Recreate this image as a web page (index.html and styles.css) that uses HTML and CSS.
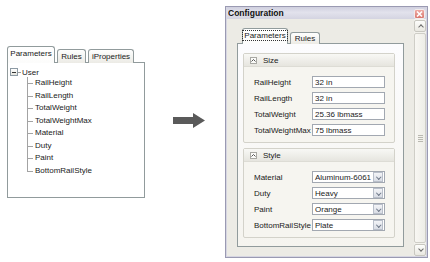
FILE: index.html
```html
<!DOCTYPE html>
<html lang="en">
<head>
    <meta charset="UTF-8">
    <title>Configuration</title>
    <link rel="stylesheet" href="styles.css">
</head>
<body>
    <div class="canvas">
        <div class="params">
            <ul class="tabs">
                <li class="tab active">Parameters</li>
                <li class="tab">Rules</li>
                <li class="tab">iProperties</li>
            </ul>
            <div class="tree">
                <div class="tree-root"><span class="toggle"></span><span class="dash"></span>User</div>
                <ul class="tree-list">
                    <li>RailHeight</li>
                    <li>RailLength</li>
                    <li>TotalWeight</li>
                    <li>TotalWeightMax</li>
                    <li>Material</li>
                    <li>Duty</li>
                    <li>Paint</li>
                    <li>BottomRailStyle</li>
                </ul>
            </div>
        </div>

        <div class="arrow">
            <svg width="32" height="15" viewBox="0 0 32 15"><polygon points="0,4 20,4 20,0 32,7.5 20,15 20,11 0,11" fill="#5a5a5a"/></svg>
        </div>

        <div class="window">
            <div class="titlebar">
                <span class="title">Configuration</span>
                <span class="close">
                    <svg width="9" height="8" viewBox="0 0 9 8"><path d="M2 1.5 L7 6.5 M7 1.5 L2 6.5" stroke="#fff" stroke-width="1.6"/></svg>
                </span>
            </div>
            <div class="client">
                <div class="main">
                    <ul class="tabs small">
                        <li class="tab active"><span class="focus">Parameters</span></li>
                        <li class="tab">Rules</li>
                    </ul>
                    <div class="tab-panel">
                        <div class="group">
                            <div class="group-head">
                                <span class="collapse"><svg width="5" height="5" viewBox="0 0 5 5"><path d="M0.5 3.5 L2.5 1.5 L4.5 3.5" fill="none" stroke="#555" stroke-width="1"/></svg></span>
                                Size
                            </div>
                            <div class="group-body">
                                <div class="field"><span class="label">RailHeight</span><span class="input">32 in</span></div>
                                <div class="field"><span class="label">RailLength</span><span class="input">32 in</span></div>
                                <div class="field"><span class="label">TotalWeight</span><span class="input">25.36 lbmass</span></div>
                                <div class="field"><span class="label">TotalWeightMax</span><span class="input">75 lbmass</span></div>
                            </div>
                        </div>
                        <div class="group">
                            <div class="group-head">
                                <span class="collapse"><svg width="5" height="5" viewBox="0 0 5 5"><path d="M0.5 3.5 L2.5 1.5 L4.5 3.5" fill="none" stroke="#555" stroke-width="1"/></svg></span>
                                Style
                            </div>
                            <div class="group-body">
                                <div class="field"><span class="label">Material</span><span class="input select">Aluminum-6061<span class="drop"></span></span></div>
                                <div class="field"><span class="label">Duty</span><span class="input select">Heavy<span class="drop"></span></span></div>
                                <div class="field"><span class="label">Paint</span><span class="input select">Orange<span class="drop"></span></span></div>
                                <div class="field"><span class="label">BottomRailStyle</span><span class="input select">Plate<span class="drop"></span></span></div>
                            </div>
                        </div>
                    </div>
                </div>
                <div class="scrollbar">
                    <div class="sb-btn up"></div>
                    <div class="sb-thumb"><span class="grip"></span></div>
                    <div class="sb-btn down"></div>
                </div>
            </div>
        </div>
    </div>
</body>
</html>
```

FILE: styles.css
```css
body{
    margin: 0;
    background: #fff;
    font-family: "Liberation Sans", Arial, sans-serif;
    font-size: 8px;
    color: #1a1a1a;
}
ul, li{
    list-style: none;
    padding: 0;
    margin: 0;
}
.canvas{
    display: flex;
    align-items: flex-start;
    width: 430px;
    height: 262px;
    overflow: hidden;
}

/* left: parameter tree */
.params{
    margin: 46px 0 0 7px;
    width: 138px;
}
.tabs{
    display: flex;
    align-items: flex-end;
    gap: 2px;
    height: 17px;
    margin-bottom: -1px;
    position: relative;
    z-index: 1;
}
.tab{
    box-sizing: border-box;
    height: 14px;
    border: 1px solid #919b9c;
    border-bottom: none;
    border-radius: 3px 3px 0 0;
    background: linear-gradient(#fefefe, #ecebe5);
    display: flex;
    align-items: center;
    justify-content: center;
    line-height: 1;
}
.tab.active{
    height: 17px;
    background: linear-gradient(#fff, #fcfcfb);
    padding-bottom: 2px;
}
.params .tab:nth-child(1){ width: 48px; }
.params .tab:nth-child(2){ width: 29px; }
.params .tab:nth-child(3){ width: 46px; }
.tree{
    box-sizing: border-box;
    height: 136px;
    border: 1px solid #919b9c;
    background: #fff;
    padding: 4px 0 0 2px;
}
.tree-root{
    height: 10px;
    display: flex;
    align-items: center;
}
.toggle{
    box-sizing: border-box;
    width: 8px;
    height: 8px;
    border: 1px solid #8d9aa4;
    background: linear-gradient(#fff, #e4e4de);
    display: flex;
    align-items: center;
    justify-content: center;
}
.toggle:after{
    content: "";
    width: 4px;
    height: 1px;
    background: #333;
}
.dash{
    width: 3px;
    height: 1px;
    background: #999;
    margin-right: 1px;
}
.tree-list li{
    position: relative;
    height: 12.5px;
    line-height: 12.5px;
    padding-left: 25px;
}
.tree-list li:before{
    content: "";
    position: absolute;
    left: 17px;
    top: 0;
    bottom: 0;
    border-left: 1px solid #a3a3a3;
}
.tree-list li:last-child:before{
    bottom: 6px;
}
.tree-list li:after{
    content: "";
    position: absolute;
    left: 17px;
    top: 6px;
    width: 6px;
    border-top: 1px solid #a3a3a3;
}

/* arrow */
.arrow{
    margin: 113px 0 0 28px;
    height: 15px;
}
.arrow svg{
    display: block;
}

/* right: configuration window */
.window{
    box-sizing: border-box;
    margin: 6px 0 0 20px;
    width: 203px;
    height: 252px;
    border: 1px solid #9a9ab2;
    background: #d6d6e2;
    padding: 0 1px 1px 1px;
}
.titlebar{
    height: 12px;
    display: flex;
    align-items: center;
    justify-content: space-between;
    background: linear-gradient(#cfcfdf, #e2e2ec 45%, #d4d4e1);
    padding: 0 1px 0 1px;
}
.title{
    font-weight: bold;
    font-size: 8.5px;
    color: #111;
}
.close{
    box-sizing: border-box;
    width: 11px;
    height: 10px;
    margin-top: 2px;
    border: 1px solid #f2ecec;
    border-radius: 2px;
    background: linear-gradient(#efaaa3, #d9786f);
    display: flex;
    align-items: center;
    justify-content: center;
}
.close svg{
    display: block;
}
.client{
    display: flex;
    height: 237px;
    background: #ecebe5;
}
.main{
    flex: 1;
    padding: 9px 10px 0 10px;
}
.tabs.small{
    padding-left: 5px;
    height: 16px;
}
.small .tab:nth-child(1){ width: 46px; height: 16px; }
.small .tab:nth-child(2){ width: 30px; height: 12px; }
.focus{
    outline: 1px dotted #333;
    outline-offset: 0;
    padding: 0 1px;
    line-height: 9px;
}
.tab-panel{
    box-sizing: border-box;
    height: 204px;
    border: 1px solid #919b9c;
    background: linear-gradient(#fcfcfe, #f5f4ef);
    padding: 9px 8px 0 5px;
}
.group{
    border: 1px solid #d3d2ca;
    border-radius: 2px;
    background: #f6f5f0;
    margin-bottom: 5px;
}
.group-head{
    height: 13px;
    display: flex;
    align-items: center;
    padding-left: 6px;
    background: linear-gradient(#f8f8f5, #e6e5df);
    border-bottom: 1px solid #dddcd5;
    box-sizing: border-box;
}
.collapse{
    box-sizing: border-box;
    width: 7px;
    height: 7px;
    border: 1px solid #a9a9a4;
    background: #fbfbf9;
    margin-right: 6px;
    display: flex;
    align-items: center;
    justify-content: center;
}
.collapse svg{
    display: block;
}
.group-body{
    padding: 9px 9px 6px 10px;
    display: flex;
    flex-direction: column;
    gap: 4px;
}
.field{
    display: flex;
    align-items: center;
    height: 12px;
}
.label{
    width: 58px;
    white-space: nowrap;
}
.input{
    box-sizing: border-box;
    width: 73px;
    height: 12px;
    border: 1px solid #a2a8b1;
    background: #fff;
    padding-left: 2px;
    display: flex;
    align-items: center;
    position: relative;
}
.drop{
    position: absolute;
    right: 1px;
    top: 0;
    box-sizing: border-box;
    width: 10px;
    height: 10px;
    border: 1px solid #b9bfca;
    background: linear-gradient(#f3f4f7, #d9dde5);
}
.drop:after{
    content: "";
    position: absolute;
    left: 2.5px;
    top: 1.5px;
    width: 2.5px;
    height: 2.5px;
    border-right: 1px solid #6d7788;
    border-bottom: 1px solid #6d7788;
    transform: rotate(45deg);
}

/* scrollbar */
.scrollbar{
    width: 13px;
    display: flex;
    flex-direction: column;
    background: #f3f2ed;
    padding-top: 1px;
}
.sb-btn{
    box-sizing: border-box;
    height: 12px;
    border: 1px solid #c8c7c0;
    border-radius: 2px;
    background: linear-gradient(#fdfdfb, #e9e8e1);
    position: relative;
}
.sb-btn:after{
    content: "";
    position: absolute;
    left: 3.5px;
    width: 3px;
    height: 3px;
    border-right: 1px solid #6a6a6a;
    border-bottom: 1px solid #6a6a6a;
}
.sb-btn.up:after{
    top: 4px;
    transform: rotate(-135deg);
}
.sb-btn.down:after{
    top: 2px;
    transform: rotate(45deg);
}
.sb-thumb{
    flex: 1;
    box-sizing: border-box;
    margin: 1px 0;
    border: 1px solid #cfcec7;
    border-radius: 2px;
    background: linear-gradient(90deg, #f8f7f3, #eeede7);
    display: flex;
    align-items: center;
    justify-content: center;
}
.grip{
    width: 5px;
    height: 7px;
    background: repeating-linear-gradient(#b9b8b0 0 1px, transparent 1px 2px);
}
```
